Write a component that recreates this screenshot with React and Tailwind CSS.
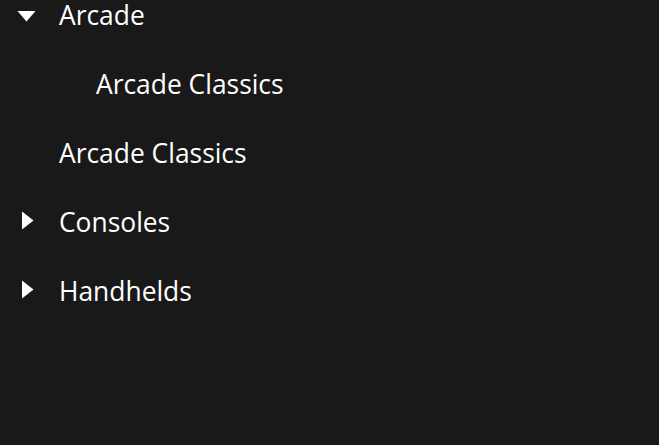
const rows = [
  { label: "Arcade", depth: 0, icon: "down" },
  { label: "Arcade Classics", depth: 1, icon: null },
  { label: "Arcade Classics", depth: 0, icon: null },
  { label: "Consoles", depth: 0, icon: "right" },
  { label: "Handhelds", depth: 0, icon: "right" },
];

function Caret({ dir }) {
  if (!dir) return <span className="block w-[20px] h-[24px] shrink-0" />;
  return (
    <svg width="20" height="24" viewBox="0 0 20 24" className="shrink-0" fill="#ffffff">
      {dir === "down" ? (
        <polygon points="1.5,11 19.5,11 10.5,21.5" />
      ) : (
        <polygon points="6,4.5 6,22.5 17.5,13.5" />
      )}
    </svg>
  );
}

export default function App() {
  return (
    <div
      className="w-[659px] h-[445px] overflow-hidden bg-[#191919] text-white"
      style={{ fontFamily: '"Open Sans", "Noto Sans", sans-serif' }}
    >
      <ul className="flex flex-col">
        {rows.map((row, i) => (
          <li key={i} className="flex items-start h-[69px] pl-[16px]">
            <Caret dir={row.icon} />
            <span
              className={
                "text-[26.4px] leading-[30px] whitespace-nowrap " +
                (row.depth === 1 ? "ml-[60px]" : "ml-[23px]")
              }
            >
              {row.label}
            </span>
          </li>
        ))}
      </ul>
    </div>
  );
}
